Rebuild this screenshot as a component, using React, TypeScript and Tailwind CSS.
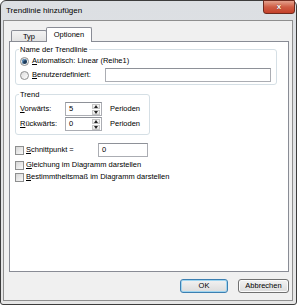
import React from 'react';

const Radio = ({ checked }: { checked?: boolean }) => (
  <span className="w-[9px] h-[9px] rounded-full border border-[#8e8f8f] bg-gradient-to-br from-[#dcdcdc] to-[#ffffff] flex items-center justify-center shrink-0">
    {checked && <span className="w-[5px] h-[5px] rounded-full bg-[#1d3b5a] shadow-[inset_1px_1px_1px_#6a9ac6]" />}
  </span>
);

const Check = () => (
  <span className="w-[9px] h-[9px] border border-[#8e8f8f] bg-gradient-to-br from-[#d6d6d6] to-[#fbfbfb] shrink-0" />
);

const Spin = ({ value }: { value: string }) => (
  <div className="w-[37px] h-[14px] shrink-0 border border-[#abadb3] border-t-[#8e9198] bg-white flex">
    <span className="flex-1 pl-[3px] flex items-center">{value}</span>
    <div className="w-[10px] flex flex-col gap-px p-px">
      <div className="flex-1 border border-[#c6c6c6] bg-gradient-to-b from-[#fafafa] to-[#e2e2e2] flex items-center justify-center">
        <span className="w-0 h-0 border-x-[2.5px] border-x-transparent border-b-[3px] border-b-[#222]" />
      </div>
      <div className="flex-1 border border-[#c6c6c6] bg-gradient-to-b from-[#fafafa] to-[#e2e2e2] flex items-center justify-center">
        <span className="w-0 h-0 border-x-[2.5px] border-x-transparent border-t-[3px] border-t-[#222]" />
      </div>
    </div>
  </div>
);

export default function App() {
  return (
    <div className="w-[300px] h-[306px] bg-white font-['Liberation_Sans',Arial,sans-serif] text-[7.5px] leading-none text-black">
      <div className="w-[297px] h-[305px] rounded-t-[6px] rounded-b-[3px] border border-[#3c3c3c] bg-gradient-to-b from-[#dcdfe3] to-[#e6e6e6] flex flex-col">
        {/* title bar */}
        <div className="h-[19px] flex items-start justify-between">
          <span className="text-[8px] pl-[5px] pt-[6px]">Trendlinie hinzufügen</span>
          <div className="w-[32px] h-[14px] -mt-px mr-px rounded-b-[3px] border border-[#6e2a1e] bg-gradient-to-b from-[#e3a08c] via-[#cf5c44] to-[#c4402a] flex items-center justify-center">
            <span className="text-white font-bold text-[8px] [text-shadow:0_0_1px_#5a1a10]">x</span>
          </div>
        </div>
        {/* client area */}
        <div className="ml-[2px] w-[290px] h-[281px] border border-[#8f8f8f] bg-[#f0f0f0] flex flex-col pt-[6px] pl-[5px]">
          {/* tabs */}
          <div className="h-[14px] flex items-end pl-[2px]">
            <div className="w-[36px] h-[11px] border border-b-0 border-[#898c95] rounded-t-[2px] bg-gradient-to-b from-[#f3f3f3] to-[#e3e3e3] flex items-center justify-center pt-px">
              Typ
            </div>
            <div className="w-[46px] h-[15px] -ml-px -mb-px relative border border-b-0 border-[#898c95] rounded-t-[2px] bg-white flex items-center justify-center">
              Optionen
            </div>
          </div>
          {/* panel */}
          <div className="w-[280px] h-[231px] border border-[#898c95] bg-white pt-[7px] pl-[5px] pr-[10px] flex flex-col">
            {/* group: Name der Trendlinie */}
            <div className="w-[262px] border border-[#d5dfe5] rounded-[3px] pl-[4px] pr-[5px] pb-[2px]">
              <div className="-mt-[5px] ml-[-1px] w-fit px-px bg-white h-[9px] flex items-center">Name der Trendlinie</div>
              <div className="h-[14px] flex items-center gap-[3px]">
                <Radio checked />
                <span><span className="underline">A</span>utomatisch: Linear (Reihe1)</span>
              </div>
              <div className="h-[14px] flex items-center gap-[3px]">
                <Radio />
                <span className="w-[70px]"><span className="underline">B</span>enutzerdefiniert:</span>
                <div className="flex-1 h-[14px] border border-[#abadb3] border-t-[#8e9198] bg-white" />
              </div>
            </div>
            {/* group: Trend */}
            <div className="flex mt-[9px]">
              <div className="w-[135px] flex-none border border-[#d5dfe5] rounded-[3px] pl-[4px] pb-[3px]">
                <div className="-mt-[5px] ml-[-1px] w-fit px-px bg-white h-[9px] flex items-center">Trend</div>
                <div className="h-[14px] mt-[3px] flex items-center">
                  <span className="w-[45px] shrink-0"><span className="underline">V</span>orwärts:</span>
                  <Spin value="5" />
                  <span className="ml-[8px]">Perioden</span>
                </div>
                <div className="h-[14px] mt-px flex items-center">
                  <span className="w-[45px] shrink-0"><span className="underline">R</span>ückwärts:</span>
                  <Spin value="0" />
                  <span className="ml-[8px]">Perioden</span>
                </div>
              </div>
            </div>
            <div className="h-[14px] mt-[8px] flex items-center gap-[2px]">
              <Check />
              <span className="w-[70px]"><span className="underline">S</span>chnittpunkt =</span>
              <div className="w-[50px] h-[14px] border border-[#abadb3] border-t-[#8e9198] bg-white pl-[3px] flex items-center">0</div>
            </div>
            <div className="h-[12px] mt-[2px] flex items-center gap-[2px]">
              <Check />
              <span><span className="underline">G</span>leichung im Diagramm darstellen</span>
            </div>
            <div className="h-[12px] flex items-center gap-[2px]">
              <Check />
              <span><span className="underline">B</span>estimmtheitsmaß im Diagramm darstellen</span>
            </div>
          </div>
          {/* buttons */}
          <div className="mt-[7px] pr-[3px] flex justify-end gap-[10px]">
            <button className="w-[48px] h-[14px] rounded-[3px] border border-[#3c7fb1] bg-gradient-to-b from-[#f2f2f2] to-[#dcdcdc] shadow-[inset_0_0_0_1px_#9fd5f0] flex items-center justify-center">
              OK
            </button>
            <button className="w-[51px] h-[14px] rounded-[3px] border border-[#707070] bg-gradient-to-b from-[#f2f2f2] to-[#dcdcdc] shadow-[inset_0_0_0_1px_#fbfbfb] flex items-center justify-center">
              Abbrechen
            </button>
          </div>
        </div>
      </div>
    </div>
  );
}
